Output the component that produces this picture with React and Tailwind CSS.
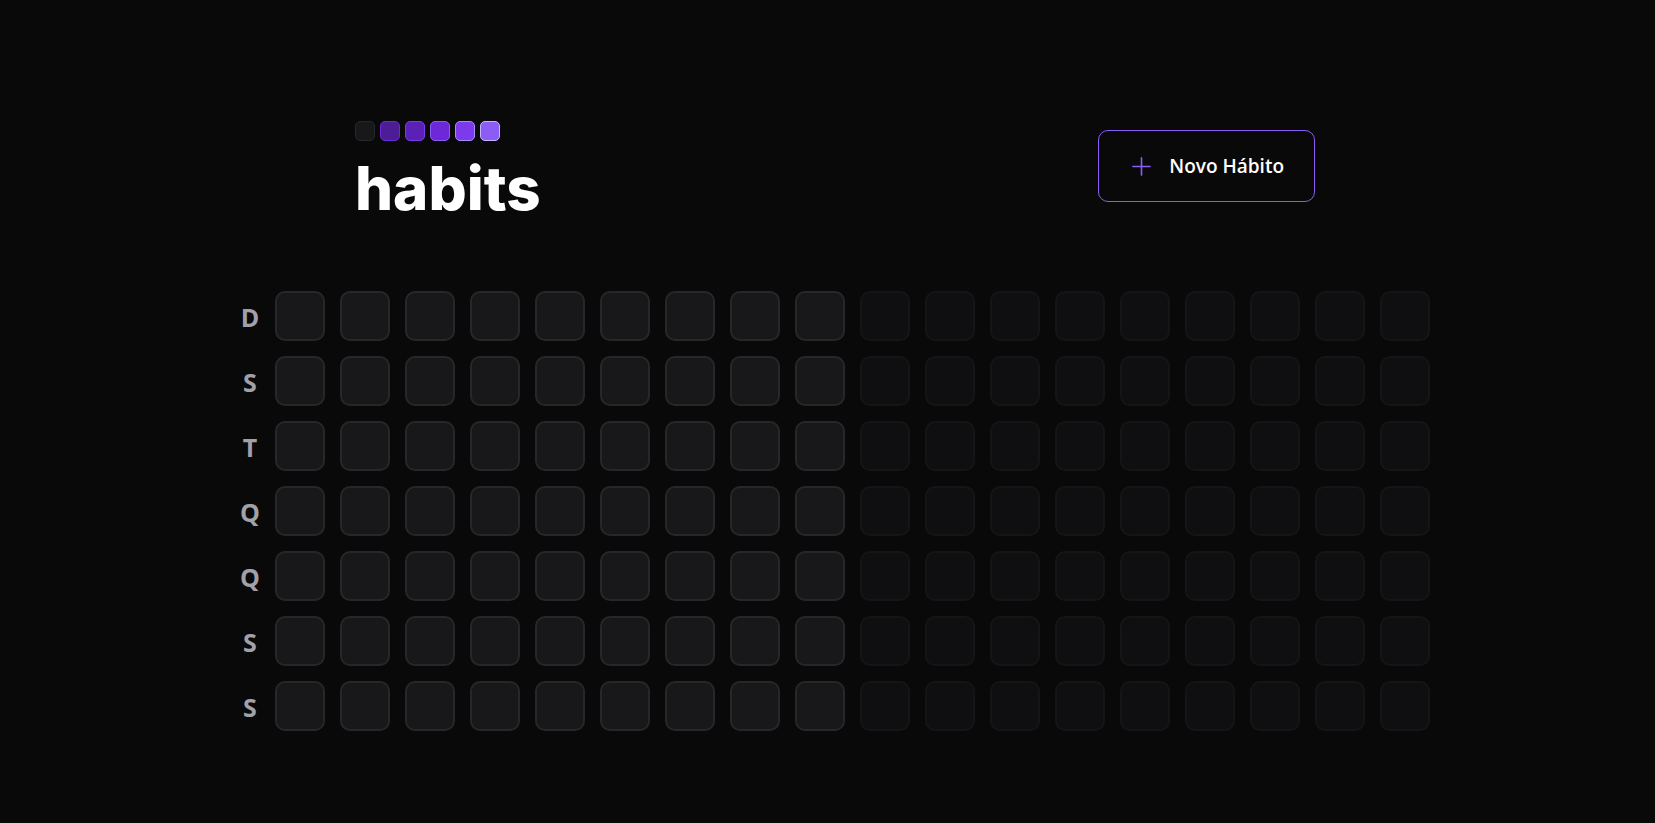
import React from "react";

const WEEK_DAYS = ["D", "S", "T", "Q", "Q", "S", "S"];
const ACTIVE_DAYS = 9 * 7;
const PLACEHOLDER_DAYS = 9 * 7;

const SWATCHES = [
  "bg-[#18181b] border-[#27272a]",
  "bg-[#4c1d95] border-[#6d28d9]",
  "bg-[#5b21b6] border-[#7c3aed]",
  "bg-[#6d28d9] border-[#8b5cf6]",
  "bg-[#7c3aed] border-[#a78bfa]",
  "bg-[#8b5cf6] border-[#c4b5fd]",
];

function Logo() {
  return (
    <div>
      <div className="flex gap-[5px]" aria-hidden="true">
        {SWATCHES.map((colors) => (
          <span key={colors} className={`size-5 rounded-[5px] border ${colors}`} />
        ))}
      </div>
      <h1 className="mt-6 font-['Inter',sans-serif] text-[60px] leading-[46px] font-extrabold text-white">
        habits
      </h1>
    </div>
  );
}

function Header() {
  return (
    <header className="flex w-full max-w-[960px] items-center justify-between">
      <Logo />
      <button
        type="button"
        className="flex h-[72px] items-center gap-[15px] rounded-[10px] border border-[#8b5cf6] px-[30px] text-[19px] font-semibold text-white hover:border-[#c4b5fd]"
      >
        <svg
          className="size-[25px] text-[#8b5cf6]"
          viewBox="0 0 25 25"
          fill="none"
          stroke="currentColor"
          strokeWidth="1.6"
          strokeLinecap="round"
          aria-hidden="true"
        >
          <path d="M3.9 12.5H21.1M12.5 3.9V21.1" />
        </svg>
        Novo Hábito
      </button>
    </header>
  );
}

function SummaryTable() {
  return (
    <section className="flex gap-[15px]">
      <div className="grid grid-rows-7 gap-[15px]">
        {WEEK_DAYS.map((day, i) => (
          <div
            key={i}
            className="flex h-[50px] w-5 items-center justify-center pt-1 text-[25px] font-bold text-[#a1a1aa]"
          >
            {day}
          </div>
        ))}
      </div>
      <div className="grid grid-flow-col grid-rows-7 gap-[15px]">
        {Array.from({ length: ACTIVE_DAYS }, (_, i) => (
          <button
            key={i}
            type="button"
            aria-label={`Dia ${i + 1}`}
            className="size-[50px] rounded-[10px] border-2 border-[#27272a] bg-[#18181b]"
          />
        ))}
        {Array.from({ length: PLACEHOLDER_DAYS }, (_, i) => (
          <div
            key={`p${i}`}
            className="size-[50px] cursor-not-allowed rounded-[10px] border-2 border-[#151516] bg-[#0f0f11]"
          />
        ))}
      </div>
    </section>
  );
}

export default function App() {
  return (
    <main className="flex min-h-screen flex-col items-center gap-20 bg-[#09090a] pt-[121px] pb-[92px] pl-[15px] font-['Open_Sans','Noto_Sans',sans-serif]">
      <Header />
      <SummaryTable />
    </main>
  );
}
